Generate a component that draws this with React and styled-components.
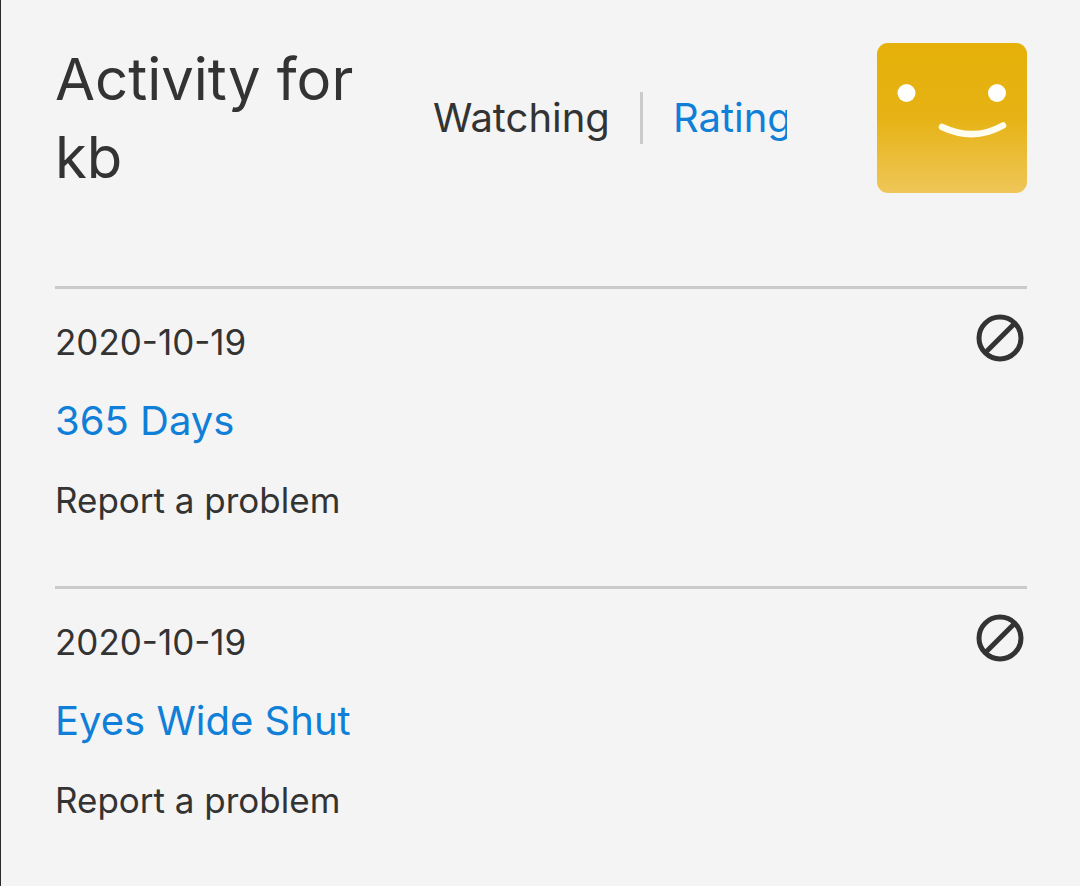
import React from 'react';
import styled, { createGlobalStyle } from 'styled-components';

const colors = {
  background: '#f4f4f4',
  text: '#333333',
  link: '#0f7fd8',
  rule: '#cacaca',
  edge: '#2b2b2b',
};

const GlobalStyle = createGlobalStyle`
  *, *::before, *::after {
    box-sizing: border-box;
  }

  body {
    margin: 0;
    background: ${colors.background};
    color: ${colors.text};
    font-family: Inter, Roboto, "Liberation Sans", sans-serif;
  }
`;

const Page = styled.main`
  min-height: 100vh;
  padding: 40px 53px 32px 54px;
  border-left: 1px solid ${colors.edge};
`;

const Header = styled.header`
  display: flex;
  align-items: center;
  padding-bottom: 90px;
`;

const Title = styled.h1`
  flex: 0 1 378px;
  margin: 0;
  padding-right: 56px;
  font-size: 58px;
  font-weight: 400;
  line-height: 78px;
`;

const Tabs = styled.nav`
  flex: 0 1 354px;
  display: flex;
  align-items: center;
  overflow: hidden;
  white-space: nowrap;
`;

const Tab = styled.a`
  padding-right: 30px;
  color: ${props => props.$active ? colors.text : colors.link};
  font-size: 40px;
  line-height: 52px;
  text-decoration: none;

  & + & {
    padding-left: 30px;
    border-left: 3px solid ${colors.rule};
  }
`;

const Avatar = styled.svg`
  flex: none;
  width: 150px;
  height: 150px;
  margin-left: auto;
`;

const List = styled.ul`
  margin: 0;
  padding: 0;
  list-style: none;
`;

const Row = styled.li`
  display: flex;
  justify-content: space-between;
  align-items: flex-start;
  padding: 24px 0 64px;
  border-top: 3px solid ${colors.rule};
`;

const Details = styled.div`
  display: flex;
  flex-direction: column;
  align-items: flex-start;
  gap: 35px;
  padding-top: 7px;
`;

const ViewedOn = styled.time`
  font-size: 35px;
  line-height: 44px;
`;

const ShowLink = styled.a`
  color: ${colors.link};
  font-size: 40px;
  line-height: 44px;
  text-decoration: none;
`;

const ReportLink = styled.a`
  color: inherit;
  font-size: 35px;
  line-height: 44px;
  text-decoration: none;
`;

const HideButton = styled.button`
  display: flex;
  padding: 0 2px;
  border: none;
  background: transparent;
  color: ${colors.text};
  cursor: pointer;
`;

const HideIcon = () => (
  <svg width="50" height="50" viewBox="0 0 50 50" fill="none" stroke="currentColor" strokeWidth="5" aria-hidden="true">
    <circle cx="25" cy="25" r="21" />
    <path d="M10.5 39.5 39.5 10.5" />
  </svg>
);

const Smiley = () => (
  <Avatar viewBox="0 0 150 150" role="img" aria-label="kb">
    <defs>
      <linearGradient id="avatarFill" x1="0" y1="0" x2="0" y2="1">
        <stop offset="0" stopColor="#e5b008" />
        <stop offset="0.5" stopColor="#e6b315" />
        <stop offset="1" stopColor="#efc658" />
      </linearGradient>
    </defs>
    <rect width="150" height="150" rx="11" fill="url(#avatarFill)" />
    <circle cx="29.5" cy="50" r="9" fill="#fff" />
    <circle cx="120" cy="50" r="9" fill="#fff" />
    <path d="M65 84Q97 99 126 82.5" fill="none" stroke="#fffdf0" strokeWidth="6.5" strokeLinecap="round" />
  </Avatar>
);

const activity = [
  { date: '2020-10-19', title: '365 Days' },
  { date: '2020-10-19', title: 'Eyes Wide Shut' },
];

const App = () => {
  return (
    <Page>
      <GlobalStyle />
      <Header>
        <Title>Activity for kb</Title>
        <Tabs>
          <Tab href="#watching" $active>Watching</Tab>
          <Tab href="#rating">Rating</Tab>
        </Tabs>
        <Smiley />
      </Header>
      <List>
        {activity.map(item => (
          <Row key={item.title}>
            <Details>
              <ViewedOn dateTime={item.date}>{item.date}</ViewedOn>
              <ShowLink href="#title">{item.title}</ShowLink>
              <ReportLink href="#report">Report a problem</ReportLink>
            </Details>
            <HideButton type="button" aria-label={`Hide ${item.title}`}>
              <HideIcon />
            </HideButton>
          </Row>
        ))}
      </List>
    </Page>
  );
};

export default App;
